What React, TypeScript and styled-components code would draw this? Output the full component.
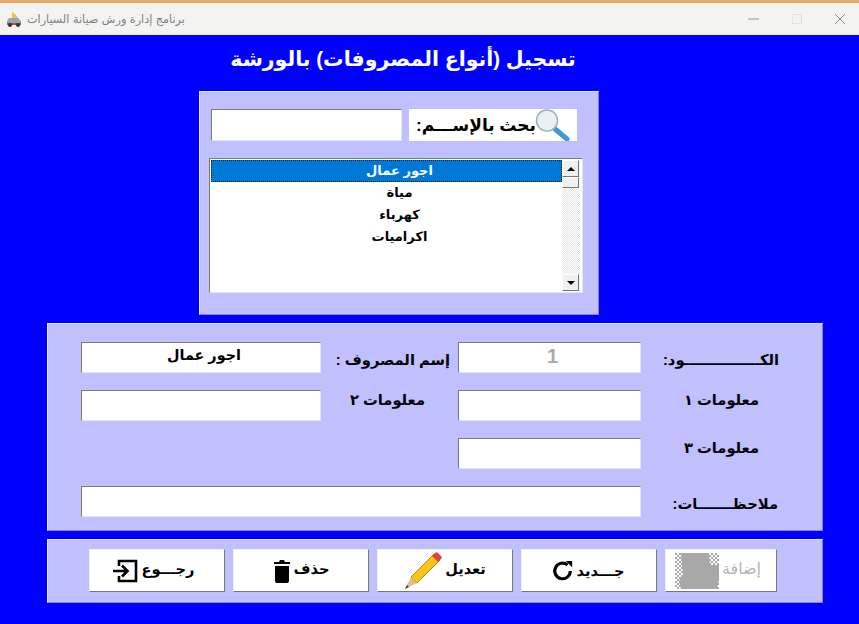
import React from "react";
import styled, { createGlobalStyle } from "styled-components";

const Global = createGlobalStyle`
  html, body { margin: 0; padding: 0; background: #0000ff; }
  #root { width: 859px; height: 624px; overflow: hidden; }
  * { box-sizing: border-box; }
`;

const arabic = `"Liberation Sans", "DejaVu Sans", "Noto Sans", sans-serif`;

const Page = styled.div`
  width: 859px;
  height: 624px;
  display: flex;
  flex-direction: column;
  background: #0000ff;
  font-family: ${arabic};
`;
const Accent = styled.div`
  height: 3px;
  background: #e9a868;
`;
const TitleBar = styled.div`
  height: 32px;
  background: #f3f3f1;
  display: flex;
  align-items: center;
  padding: 0 0 0 6px;
`;
const WindowTitle = styled.div`
  direction: rtl;
  font-size: 11.2px;
  color: #808080;
  margin-left: 5px;
  font-family: "DejaVu Sans", sans-serif;
`;
const Controls = styled.div`
  margin-left: auto;
  display: flex;
  align-items: center;
  margin-right: 13px;
  gap: 31px;
`;
const Heading = styled.h1`
  margin: 0;
  height: 56px;
  direction: rtl;
  text-align: center;
  color: #fff;
  font-size: 20.5px;
  font-weight: 700;
  line-height: 48px;
  padding-right: 53px;
`;
const Panel = styled.section`
  background: #c0c0ff;
  border: 1px solid;
  border-color: #e8e8ff #8888bb #8888bb #e8e8ff;
`;
const SearchPanel = styled(Panel)`
  width: 400px;
  height: 224px;
  margin-left: 199px;
  padding: 17px 15px 0 9px;
  display: flex;
  flex-direction: column;
`;
const SearchRow = styled.div`
  display: flex;
  margin-left: 2px;
  gap: 7px;
`;
const Sunken = styled.div<{ $w?: number }>`
  width: ${(p) => (p.$w ? p.$w + "px" : "100%")};
  height: 32px;
  background: #fff;
  border: 1px solid;
  border-color: #7a7a7a #e4e4f4 #e4e4f4 #7a7a7a;
`;
const SearchLabel = styled.div`
  width: 168px;
  height: 32px;
  background: #fff;
  display: flex;
  align-items: center;
  direction: rtl;
  font-size: 17px;
  font-weight: 700;
  color: #000;
  position: relative;
  padding-right: 41px;
  white-space: nowrap;
`;
const MagIcon = styled.svg`
  position: absolute;
  right: 7px;
  top: 0;
`;
const ListBox = styled.div`
  margin-top: 17px;
  width: 374px;
  height: 135px;
  background: #fff;
  border: 1px solid;
  border-color: #7a7a7a #e4e4f4 #e4e4f4 #7a7a7a;
  display: flex;
  padding: 1px 2px 1px 1px;
`;
const Rows = styled.div`
  flex: 1;
  direction: rtl;
`;
const Row = styled.div<{ $on?: boolean }>`
  height: 22px;
  line-height: 21px;
  text-align: center;
  padding-right: 0;
  padding-left: 26px;
  font-size: 13px;
  font-weight: 700;
  color: ${(p) => (p.$on ? "#fff" : "#000")};
  background: ${(p) => (p.$on ? "#0078d7" : "transparent")};
  outline: ${(p) => (p.$on ? "1px dotted #222" : "none")};
  outline-offset: -1px;
`;
const Scroll = styled.div`
  width: 18px;
  display: flex;
  flex-direction: column;
  background: repeating-conic-gradient(#e6e6e6 0 25%, #fff 0 50%) 0 0 / 2px 2px;
`;
const ScrollBtn = styled.div<{ $grow?: boolean }>`
  width: 17px;
  height: 17px;
  background: #f0f0f0;
  border: 1px solid;
  border-color: #fff #777 #777 #fff;
  display: flex;
  align-items: center;
  justify-content: center;
  margin-top: ${(p) => (p.$grow ? "auto" : "0")};
`;
const ScrollThumb = styled.div`
  width: 17px;
  height: 11px;
  background: #f0f0f0;
  border: 1px solid;
  border-color: #fff #777 #777 #fff;
`;
const Tri = styled.div<{ $down?: boolean }>`
  width: 0;
  height: 0;
  border-left: 4px solid transparent;
  border-right: 4px solid transparent;
  ${(p) => (p.$down ? "border-top: 4px solid #000;" : "border-bottom: 4px solid #000;")}
`;
const FormPanel = styled(Panel)`
  width: 776px;
  height: 208px;
  margin: 8px 0 0 47px;
  padding: 18px 0 0 33px;
  display: grid;
  grid-template-columns: 240px 137px 183px 181px;
  grid-template-rows: 31px 31px 31px 31px;
  row-gap: 17px;
`;
const Field = styled.div<{ $gray?: boolean; $span?: boolean }>`
  height: 31px;
  background: #fff;
  border: 1px solid;
  border-color: #7a7a7a #e4e4f4 #e4e4f4 #7a7a7a;
  direction: rtl;
  text-align: center;
  font-weight: 700;
  font-family: "Liberation Sans", "DejaVu Sans", sans-serif;
  padding-left: 6px;
  font-size: ${(p) => (p.$gray ? "20px" : "14.4px")};
  line-height: ${(p) => (p.$gray ? "27px" : "24px")};
  color: ${(p) => (p.$gray ? "#a9a9a9" : "#000")};
  ${(p) => (p.$span ? "grid-column: 1 / span 3;" : "")}
`;
const Label = styled.div<{ $dx?: number; $dy?: number }>`
  direction: rtl;
  font-size: 14.7px;
  font-weight: 700;
  color: #000;
  white-space: nowrap;
  text-align: right;
  padding-right: ${(p) => p.$dx ?? 0}px;
  line-height: 31px;
  margin-top: ${(p) => p.$dy ?? 0}px;
`;
const ButtonPanel = styled(Panel)`
  width: 776px;
  height: 64px;
  margin: 8px 0 0 47px;
  padding: 9px 0 0 41px;
  display: flex;
  gap: 8px;
`;
const Btn = styled.div<{ $w?: number; $off?: boolean; $left?: number }>`
  width: ${(p) => p.$w ?? 136}px;
  height: 43px;
  background: #fff;
  border: 1px solid;
  border-color: #f0f0f0 #777 #777 #f0f0f0;
  display: flex;
  align-items: center;
  justify-content: center;
  padding-right: ${(p) => p.$left ?? 0}px;
  gap: 3px;
  font-size: 14.6px;
  font-weight: 700;
  color: ${(p) => (p.$off ? "#b4b4b4" : "#000")};
  direction: ltr;
`;
const BtnText = styled.span<{ $up?: number; $light?: boolean }>`
  direction: rtl;
  position: relative;
  top: -${(p) => p.$up ?? 2}px;
  font-weight: ${(p) => (p.$light ? 400 : 700)};
  font-size: ${(p) => (p.$light ? "16px" : "inherit")};
  white-space: nowrap;
`;

export default function App() {
  return (
    <Page>
      <Global />
      <Accent />
      <TitleBar>
        <svg width="16" height="17" viewBox="0 0 16 17">
          <path d="M6 1l4 3 2 3-6 1z" fill="#e8c840" />
          <path d="M1 10l2-3h9l3 3v3H1z" fill="#8fa8b8" />
          <path d="M1 12h14v2H1z" fill="#b05030" />
          <circle cx="4" cy="14" r="2" fill="#333" />
          <circle cx="12" cy="14" r="2" fill="#333" />
        </svg>
        <WindowTitle>برنامج إدارة ورش صيانة السيارات</WindowTitle>
        <Controls>
          <svg width="12" height="12" viewBox="0 0 12 12"><path d="M0 6h11" stroke="#999" /></svg>
          <svg width="12" height="12" viewBox="0 0 12 12"><rect x="1.5" y="1.5" width="9" height="9" fill="none" stroke="#e2e2e2" /></svg>
          <svg width="12" height="12" viewBox="0 0 12 12"><path d="M1 1l10 10M11 1L1 11" stroke="#888" /></svg>
        </Controls>
      </TitleBar>
      <Heading>تسجيل (أنواع المصروفات) بالورشة</Heading>
      <SearchPanel>
        <SearchRow>
          <Sunken $w={191} />
          <SearchLabel>
            بحث بالإســـم:
            <MagIcon width="36" height="32" viewBox="0 0 36 32">
              <path d="M21 20l12 10" stroke="#3f97d8" strokeWidth="5" strokeLinecap="round" />
              <circle cx="13" cy="11.5" r="10.5" fill="#e9f1f4" stroke="#9fb0b5" strokeWidth="1.5" />
            </MagIcon>
          </SearchLabel>
        </SearchRow>
        <ListBox>
          <Rows>
            <Row $on>اجور عمال</Row>
            <Row>مياة</Row>
            <Row>كهرباء</Row>
            <Row>اكراميات</Row>
          </Rows>
          <Scroll>
            <ScrollBtn><Tri /></ScrollBtn>
            <ScrollThumb />
            <ScrollBtn $grow><Tri $down /></ScrollBtn>
          </Scroll>
        </ListBox>
      </SearchPanel>
      <FormPanel>
        <Field>اجور عمال</Field>
        <Label $dx={8} $dy={3}>إسم المصروف :</Label>
        <Field $gray>1</Field>
        <Label $dx={43} $dy={3}>الكـــــــــــــــود:</Label>

        <Field />
        <Label $dx={33} $dy={-5}>معلومات ٢</Label>
        <Field />
        <Label $dx={63} $dy={-5}>معلومات ١</Label>

        <span />
        <span />
        <Field />
        <Label $dx={63} $dy={-5}>معلومات ٣</Label>

        <Field $span />
        <Label $dx={44} $dy={3}>ملاحظـــــــات:</Label>
      </FormPanel>
      <ButtonPanel>
        <Btn $left={7}>
          <svg width="26" height="24" viewBox="0 0 26 24" fill="none" stroke="#000" strokeWidth="2.6">
            <path d="M1 12h14M10 6.5l5.5 5.5-5.5 5.5" />
            <path d="M7 7V2h17v20H7v-5" />
          </svg>
          <BtnText>رجـــوع</BtnText>
        </Btn>
        <Btn>
          <svg width="18" height="24" viewBox="0 0 18 24" fill="#000">
            <path d="M1 3h5l1-2h4l1 2h5v2H1z" />
            <path d="M2 7h14v15a2 2 0 0 1-2 2H4a2 2 0 0 1-2-2z" />
          </svg>
          <BtnText>حذف</BtnText>
        </Btn>
        <Btn $left={0}>
          <svg width="38" height="38" viewBox="0 0 38 38">
            <path d="M7 25L30 2l6 6-23 23z" fill="#f5c518" stroke="#b8860b" />
            <path d="M28 4l3-3a2 2 0 0 1 3 0l3 3a2 2 0 0 1 0 3l-3 3z" fill="#e0453a" />
            <path d="M7 25l6 6-12 6z" fill="#e8bd90" />
            <path d="M3 33l2 2-4 2z" fill="#5a3020" />
          </svg>
          <BtnText>تعديل</BtnText>
        </Btn>
        <Btn $left={2}>
          <svg width="22" height="22" viewBox="0 0 24 24" fill="none" stroke="#000" strokeWidth="3.4">
            <path d="M20 12a8.5 8.5 0 1 1-3-6.5" />
            <path d="M15 1l7 0v7z" fill="#000" stroke="none" />
          </svg>
          <BtnText $up={0}>جـــديد</BtnText>
        </Btn>
        <Btn $w={112} $off $left={6}>
          <svg width="44" height="36" viewBox="0 0 44 36">
            <defs>
              <pattern id="dither" width="4" height="4" patternUnits="userSpaceOnUse">
                <rect width="2" height="2" fill="#a8a8a8" />
                <rect x="2" y="2" width="2" height="2" fill="#a8a8a8" />
              </pattern>
            </defs>
            <rect width="44" height="36" fill="url(#dither)" />
            <path d="M6 0h28l1 12h9v14l-2 10H6l-2-8 4-6z" fill="#a8a8a8" />
          </svg>
          <BtnText $light>إضافة</BtnText>
        </Btn>
      </ButtonPanel>
    </Page>
  );
}
